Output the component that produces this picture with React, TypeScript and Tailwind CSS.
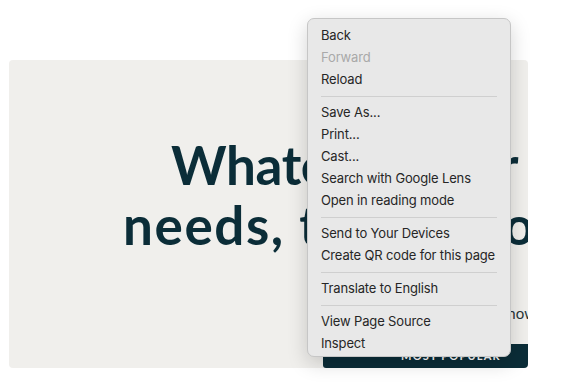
import React from "react";

type Entry = { label: string; disabled?: boolean } | "sep";

const entries: Entry[] = [
  { label: "Back" },
  { label: "Forward", disabled: true },
  { label: "Reload" },
  "sep",
  { label: "Save As..." },
  { label: "Print..." },
  { label: "Cast..." },
  { label: "Search with Google Lens" },
  { label: "Open in reading mode" },
  "sep",
  { label: "Send to Your Devices" },
  { label: "Create QR code for this page" },
  "sep",
  { label: "Translate to English" },
  "sep",
  { label: "View Page Source" },
  { label: "Inspect" },
];

export default function App() {
  return (
    <div className="relative w-[582px] h-[383px] bg-white overflow-hidden">
      <div className="pt-[60px] pl-[9px]">
        <div className="w-[519px] h-[308px] bg-[#f0efec] rounded-[4px] overflow-hidden flex flex-col font-['Lato',sans-serif]">
          <div className="pt-[75px] flex flex-col text-[53px] leading-[60px] font-bold text-[#0b2d38] whitespace-nowrap">
            <div className="ml-[162px] h-[60px] tracking-[-0.35px]">Whatever your</div>
            <div className="ml-[114px] h-[60px] tracking-[1.6px]">needs, there's room</div>
          </div>
          <div className="mt-[48px] h-[20px] leading-[20px] ml-[426px] whitespace-nowrap text-[15px] text-[#2a3438]">
            Save more now
          </div>
          <div className="mt-[21px] ml-[314px] w-[256px] h-[24px] shrink-0 bg-[#0b2d38] rounded-[3px] flex items-center justify-center">
            <span className="text-[11px] font-bold tracking-[1.2px] text-white leading-none pb-[2px]">MOST POPULAR</span>
          </div>
        </div>
      </div>

      <div className="absolute left-[307px] top-[18px] w-[204px] h-[339px] rounded-[7px] bg-[#e8e8e8] border border-[#c6c6c6] shadow-[0_6px_20px_rgba(0,0,0,0.18)] pt-[6px] pb-[2px] font-['Inter',sans-serif] text-[13px] tracking-[-0.15px]">
        {entries.map((e, i) =>
          e === "sep" ? (
            <div key={i} className="h-[11px] flex items-center px-[13px]">
              <div className="h-px w-full bg-[#cfcfcf]" />
            </div>
          ) : (
            <div
              key={i}
              className={`h-[22px] flex items-center px-[13px] whitespace-nowrap ${e.disabled ? "text-[#a9a9a9]" : "text-[#262626]"}`}
            >
              {e.label}
            </div>
          )
        )}
      </div>
    </div>
  );
}
